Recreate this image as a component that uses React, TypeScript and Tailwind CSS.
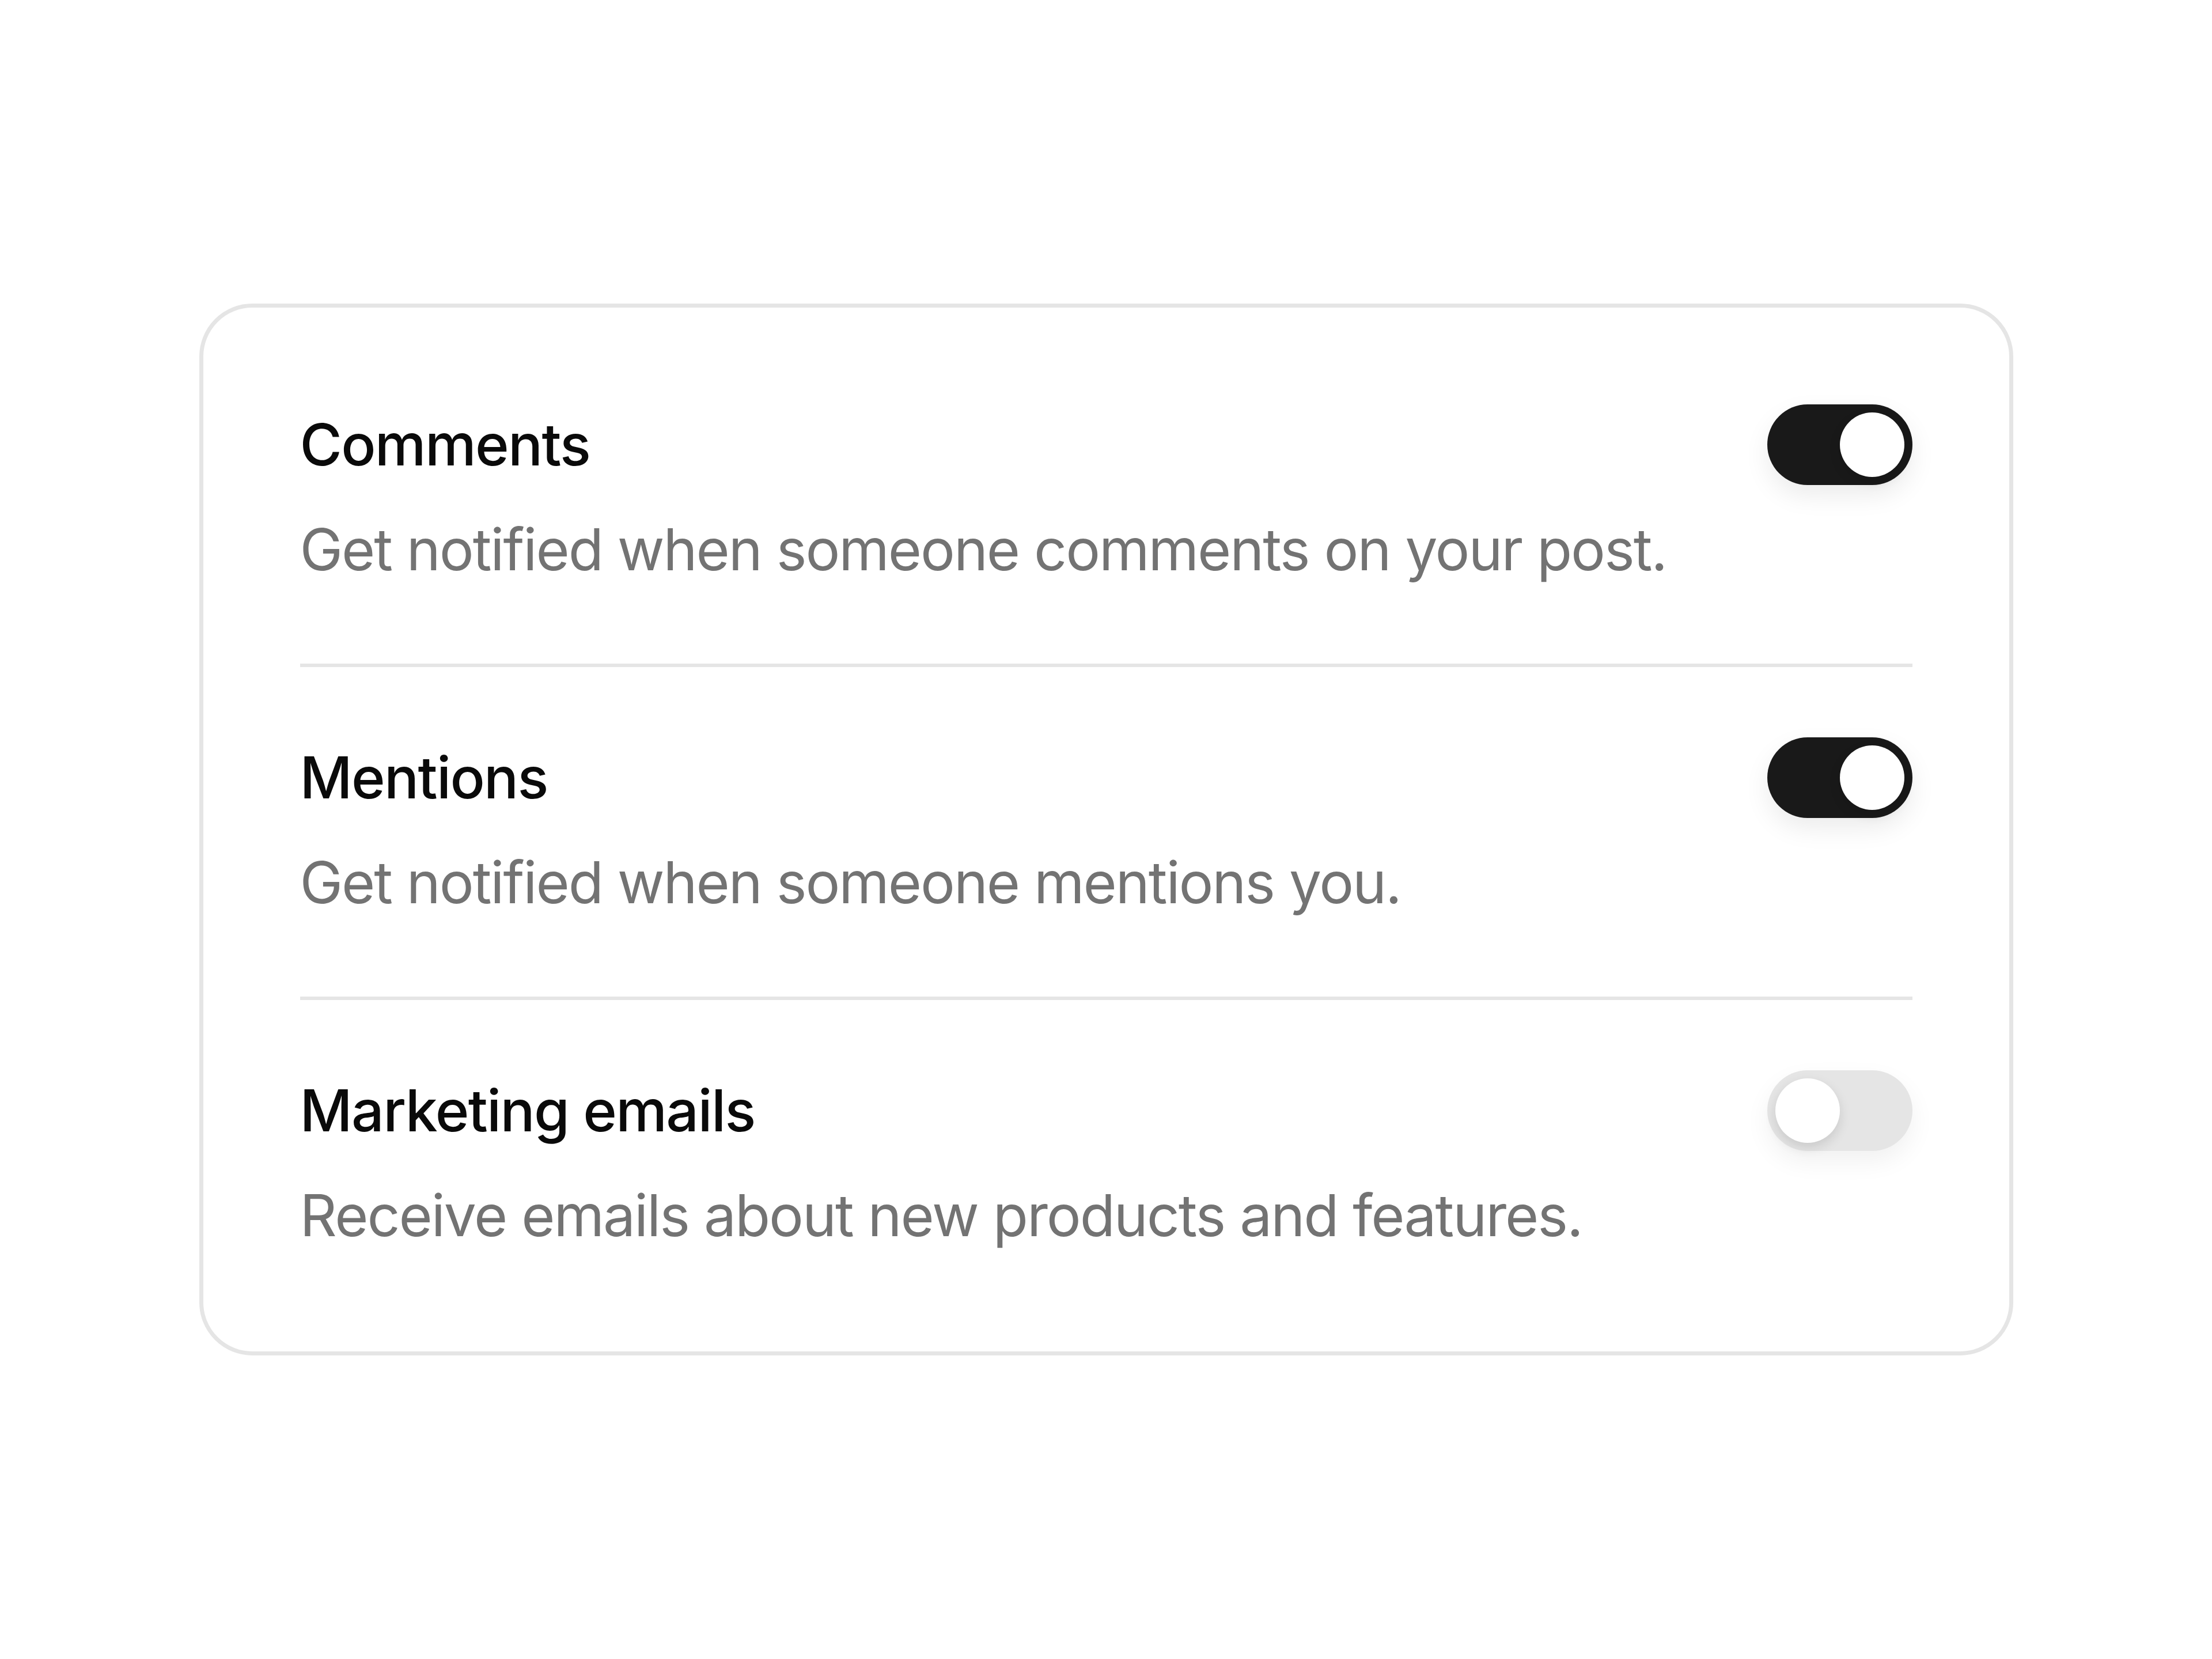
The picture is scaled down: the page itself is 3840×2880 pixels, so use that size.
import { useState } from 'react';

type Setting = {
  id: string;
  title: string;
  description: string;
  enabled: boolean;
};

const initialSettings: Setting[] = [
  {
    id: 'comments',
    title: 'Comments',
    description: 'Get notified when someone comments on your post.',
    enabled: true,
  },
  {
    id: 'mentions',
    title: 'Mentions',
    description: 'Get notified when someone mentions you.',
    enabled: true,
  },
  {
    id: 'marketing',
    title: 'Marketing emails',
    description: 'Receive emails about new products and features.',
    enabled: false,
  },
];

function Toggle({ checked, onChange, label }: { checked: boolean; onChange: () => void; label: string }) {
  return (
    <button
      type="button"
      role="switch"
      aria-checked={checked}
      aria-label={label}
      onClick={onChange}
      className={
        checked
          ? 'flex h-[140px] w-[252px] shrink-0 items-center justify-end rounded-full bg-[#191919] p-[14px] shadow-[0_18px_44px_rgba(0,0,0,0.08)]'
          : 'flex h-[140px] w-[252px] shrink-0 items-center justify-start rounded-full bg-[#e5e5e5] p-[14px] shadow-[0_18px_44px_rgba(0,0,0,0.06)]'
      }
    >
      <span className="size-[112px] rounded-full bg-white shadow-[0_8px_20px_rgba(0,0,0,0.12)]" />
    </button>
  );
}

export default function App() {
  const [settings, setSettings] = useState(initialSettings);

  const toggle = (id: string) =>
    setSettings((prev) => prev.map((s) => (s.id === id ? { ...s, enabled: !s.enabled } : s)));

  return (
    <div className="flex min-h-screen items-center justify-center bg-white font-['Inter','Noto_Sans',sans-serif]">
      <div className="w-[3149px] rounded-[92px] border-[7px] border-[#e5e5e5] bg-white px-[168px] pt-[168px] pb-[166px]">
        {settings.map((s, i) => (
          <div key={s.id}>
            {i > 0 && <div className="h-[6px] bg-[#e5e5e5]" />}
            <div
              className={
                'flex items-start justify-between ' +
                (i === 0 ? 'pb-[128px]' : i === settings.length - 1 ? 'pt-[122px]' : 'pt-[122px] pb-[128px]')
              }
            >
              <div className="flex flex-col">
                <span className="text-[100px] leading-[140px] font-medium tracking-[-1.7px] text-[#0a0a0a]">
                  {s.title}
                </span>
                <span className="mt-[42px] text-[100px] leading-[140px] tracking-[-2.1px] text-[#737373]">
                  {s.description}
                </span>
              </div>
              <Toggle checked={s.enabled} onChange={() => toggle(s.id)} label={s.title} />
            </div>
          </div>
        ))}
      </div>
    </div>
  );
}
